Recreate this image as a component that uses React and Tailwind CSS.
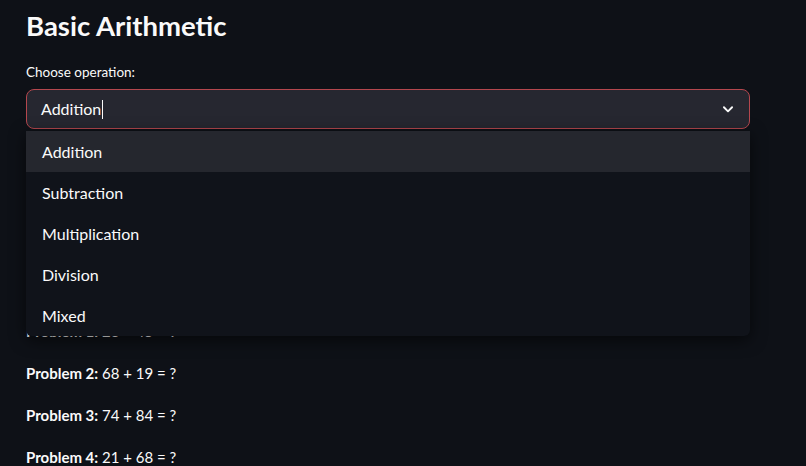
const OPTIONS = ["Addition", "Subtraction", "Multiplication", "Division", "Mixed"];

const PROBLEMS = [
  ["Problem 1:", "23 + 45 = ?"],
  ["Problem 2:", "68 + 19 = ?"],
  ["Problem 3:", "74 + 84 = ?"],
  ["Problem 4:", "21 + 68 = ?"],
];

function Chevron() {
  return (
    <svg width="14" height="14" viewBox="0 0 24 24" fill="none" stroke="currentColor" strokeWidth="3.2" strokeLinecap="round" strokeLinejoin="round">
      <path d="M5 9l7 7 7-7" />
    </svg>
  );
}

export default function App() {
  return (
    <div
      className="h-[466px] w-[806px] overflow-hidden bg-[#0e1117] text-[#fafafa]"
      style={{ fontFamily: 'Lato, "Noto Sans", sans-serif' }}
    >
      <div className="px-[26px] pt-[6px]">
        <h1 className="text-[27.5px] font-bold leading-[40px]">Basic Arithmetic</h1>

        <div className="mt-[18px] text-[13.5px] leading-[16px]">Choose operation:</div>

        <div className="relative mt-[9px] w-[724px]">
          <div className="flex h-[40px] items-center justify-between rounded-[8px] border border-[#b4474e] bg-[#262730] pl-[14px] pr-[14px]">
            <span className="flex items-center text-[16px]">
              Addition
              <span className="ml-[1px] inline-block h-[19px] w-[1px] bg-[#fafafa]" />
            </span>
            <span className="text-[#fafafa]">
              <Chevron />
            </span>
          </div>

          {/* open menu */}
          <div className="absolute left-0 right-0 top-[42px] z-10 overflow-hidden rounded-b-[6px] bg-[#10131a] shadow-[0_4px_16px_rgba(0,0,0,0.6)]">
            {OPTIONS.map((o, i) => (
              <div
                key={o}
                className={`flex h-[41px] items-center px-[16px] text-[16px] ${i === 0 ? "bg-[#25272e]" : ""}`}
              >
                {o}
              </div>
            ))}
          </div>
        </div>

        <div className="mt-[190px] flex flex-col gap-[18px]">
          {PROBLEMS.map(([label, expr]) => (
            <div key={label} className="text-[15px] leading-[24px]">
              <span className="font-bold">{label}</span> {expr}
            </div>
          ))}
        </div>
      </div>
    </div>
  );
}
